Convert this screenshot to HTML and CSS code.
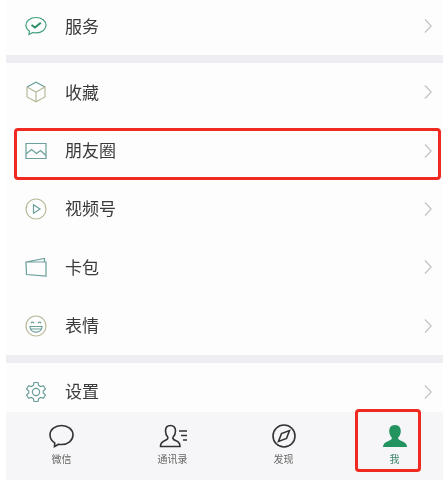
FILE: index.html
```html
<!DOCTYPE html>
<html lang="zh-CN">
<head>
	<meta charset="UTF-8">
	<meta name="viewport" content="width=device-width, initial-scale=1.0">
	<title>我</title>
	<link rel="stylesheet" href="styles.css">
</head>
<body>
	<main class="page">
		<section class="group">
			<div class="row row-first">
				<svg class="icon" viewBox="0 0 22 22"><path class="green" d="M11 2.500C5.400 2.500 1 5.900 1 10.200C1 12.600 2.300 14.700 4.400 16L4 19.500L8 17.500C9 17.800 10 17.900 11 17.900C16.600 17.900 21 14.500 21 10.200C21 5.900 16.600 2.500 11 2.500Z"/><path class="green-bold" d="M6.500 10L10 12.500L15.800 7.800"/></svg>
				<span class="label">服务</span>
				<svg class="chevron" viewBox="0 0 8 14"><path d="M1 .5L7.200 7L1 13.500"/></svg>
			</div>
		</section>
		<section class="group">
			<div class="row">
				<svg class="icon" viewBox="0 0 22 22"><path class="teal" d="M2 6L11 1.200L20 6"/><path class="olive" d="M2 6V16L11 20.800L20 16V6L11 11L2 6M11 11V20.800"/></svg>
				<span class="label">收藏</span>
				<svg class="chevron" viewBox="0 0 8 14"><path d="M1 .5L7.200 7L1 13.500"/></svg>
			</div>
			<div class="row">
				<svg class="icon" viewBox="0 0 22 22"><path class="teal" d="M1 3.500H21V18.500H1Z"/><path class="teal" d="M1 14L6.500 9.500L11.500 13.500L15.500 10.500L21 15.500"/></svg>
				<span class="label">朋友圈</span>
				<svg class="chevron" viewBox="0 0 8 14"><path d="M1 .5L7.200 7L1 13.500"/></svg>
				<div class="mark mark-row"></div>
			</div>
			<div class="row">
				<svg class="icon" viewBox="0 0 22 22"><circle class="olive" cx="11" cy="11" r="10"/><path class="teal" d="M8.500 6.800L15 11L8.500 15.200Z"/></svg>
				<span class="label">视频号</span>
				<svg class="chevron" viewBox="0 0 8 14"><path d="M1 .5L7.200 7L1 13.500"/></svg>
			</div>
			<div class="row">
				<svg class="icon" viewBox="0 0 22 22"><path class="teal" d="M1 6L19.500 2.500V6M1 6H21V20L1.500 18.500Z"/></svg>
				<span class="label">卡包</span>
				<svg class="chevron" viewBox="0 0 8 14"><path d="M1 .5L7.200 7L1 13.500"/></svg>
			</div>
			<div class="row">
				<svg class="icon" viewBox="0 0 22 22"><circle class="olive" cx="11" cy="11" r="10"/><path class="teal" d="M5 11.500H17C17 15 14.500 17.200 11 17.200C7.500 17.200 5 15 5 11.500ZM5.500 14H16.500"/><path class="teal" d="M6 8.300C6.800 6.800 8.200 6.800 9 8.300M13 8.300C13.800 6.800 15.200 6.800 16 8.300"/></svg>
				<span class="label">表情</span>
				<svg class="chevron" viewBox="0 0 8 14"><path d="M1 .5L7.200 7L1 13.500"/></svg>
			</div>
		</section>
		<section class="group">
			<div class="row row-last">
				<svg class="icon" viewBox="0 0 22 22"><path class="teal" d="M9 1.500H13L13.600 4.300L15.700 5.500L18.400 4.600L20.400 8L18.300 10V12L20.400 14L18.400 17.400L15.700 16.500L13.600 17.700L13 20.500H9L8.400 17.700L6.300 16.500L3.600 17.400L1.600 14L3.700 12V10L1.600 8L3.600 4.600L6.300 5.500L8.400 4.300Z"/><circle class="teal" cx="11" cy="11" r="3.600"/></svg>
				<span class="label">设置</span>
				<svg class="chevron" viewBox="0 0 8 14"><path d="M1 .5L7.200 7L1 13.500"/></svg>
			</div>
		</section>
		<nav class="tabbar">
			<div class="tab">
				<svg class="tab-icon" viewBox="0 0 30 24"><path class="dark" d="M14.500 1.500C8.200 1.500 3 5.600 3 11C3 14.200 4.900 17 7.700 18.800L7.500 22.500L11.700 20.200C12.600 20.400 13.500 20.500 14.500 20.500C20.800 20.500 26 16.400 26 11C26 5.600 20.800 1.500 14.500 1.500Z"/></svg>
				<span class="tab-label">微信</span>
			</div>
			<div class="tab">
				<svg class="tab-icon" viewBox="0 0 30 24"><path class="dark" d="M12.500 1.500C9 1.500 7.500 4 7.500 7C7.500 10 8.800 12 9.800 13.200C10.300 14.500 9 15.700 6.500 16.800C4.200 17.800 2.500 19.200 2.500 22.500H22C22 19.200 20.500 17.800 18 16.800C15.800 15.900 14.500 14.500 15 13.200C16.200 12 17.500 10 17.500 7C17.500 4 16 1.500 12.500 1.500Z"/><path class="dark" d="M21 7H29M23 11.500H29M25 16H29"/></svg>
				<span class="tab-label">通讯录</span>
			</div>
			<div class="tab">
				<svg class="tab-icon" viewBox="0 0 30 24"><circle class="dark" cx="15" cy="12" r="11"/><path class="dark" d="M20.500 6.500L17.500 14.500L9.500 17.500L12.500 9.500Z"/></svg>
				<span class="tab-label">发现</span>
			</div>
			<div class="tab tab-active">
				<svg class="tab-icon" viewBox="0 0 30 24"><path class="solid" d="M15 1C11 1 9.200 3.800 9.200 7.200C9.200 10 10.500 12.200 11.800 13.500C12.200 15 11 16 8 17.200C4.800 18.400 3 20 3 23H27C27 20 25.200 18.400 22 17.200C19 16 17.800 15 18.200 13.500C19.500 12.200 20.800 10 20.800 7.200C20.800 3.800 19 1 15 1Z"/></svg>
				<span class="tab-label">我</span>
				<div class="mark mark-tab"></div>
			</div>
		</nav>
	</main>
</body>
</html>
```

FILE: styles.css
```css
*{
	box-sizing: border-box;
}
html,body{
	margin: 0; padding: 0;
	background: #fff;
}
.page{
	width: 437px; height: 480px;
	margin: 0 5px 0 6px;
	display: flex;
	flex-direction: column;
	overflow: hidden;
	background: #eeedf1;
	font-family: "Liberation Sans", "Noto Sans CJK SC", sans-serif;
	filter: blur(0.5px);
}
.group{
	display: flex;
	flex-direction: column;
	margin-bottom: 8px;
	background: #fdfdfe;
}
.group:last-of-type{ margin-bottom: 0; }
.row{
	height: 58.4px;
	display: flex;
	align-items: center;
	padding: 0 11px 0 19px;
	position: relative;
}
.row-first{ height: 55px; padding-bottom: 3px; }
.row-last{ height: 49px; padding-top: 9px; }
.icon{
	width: 22px; height: 22px;
	flex: none;
	fill: none;
	stroke-width: 1.2;
}
.label{
	margin-left: 18px;
	padding-bottom: 2px;
	flex: 1;
	font-size: 17px;
	color: #3a3a3a;
}
.chevron{
	width: 8px; height: 14px;
	flex: none;
	fill: none;
	stroke: #c4c4c4;
	stroke-width: 1.3;
}
.green{ stroke: #3f9f78; }
.green-bold{ stroke: #2f8f62; stroke-width: 2; }
.teal{ stroke: #6a9f9a; }
.olive{ stroke: #b9b99b; }
.dark{ stroke: #333; stroke-width: 1.6; fill: none; }
.solid{ fill: #23935f; }
/* red annotation boxes drawn over the content */
.mark{
	position: absolute;
	border: 3px solid #f02a20;
	border-radius: 4px;
}
.mark-row{
	left: 8px; right: 2px; top: 6.500px; bottom: -.6px;
}
.mark-tab{
	left: 16px; top: -3px;
	width: 66px; height: 63px;
}
.tabbar{
	flex: 1;
	display: grid;
	grid-template-columns: repeat(4, 111px);
	background: #f6f6f8;
}
.tab{
	display: flex;
	flex-direction: column;
	align-items: center;
	padding-top: 12px;
	position: relative;
}
.tab-icon{
	width: 30px; height: 24px;
}
.tab-label{
	margin-top: 3px;
	font-size: 10px;
	color: #666;
}
.tab-active .tab-label{ color: #3d8468; }
```
